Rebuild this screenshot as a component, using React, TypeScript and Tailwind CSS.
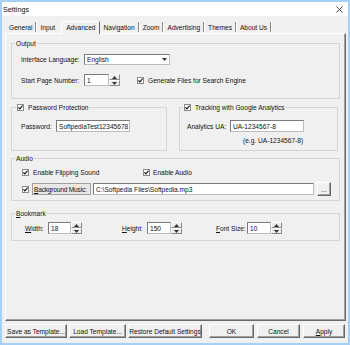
import React from "react";

const tabs = ["General", "Input", "Advanced", "Navigation", "Zoom", "Advertising", "Themes", "About Us"];

function Check() {
  return (
    <span className="inline-flex w-[7px] h-[7px] shrink-0 items-center justify-center border border-[#8a8a8a] bg-white">
      <svg width="5" height="5" viewBox="0 0 5 5">
        <path d="M0.4 2.3 L1.9 3.9 L4.6 0.7" fill="none" stroke="#111" strokeWidth="1.1" />
      </svg>
    </span>
  );
}

function Arrow({ up }: { up?: boolean }) {
  return (
    <svg width="5" height="3" viewBox="0 0 5 3">
      <path d={up ? "M0 3 L2.5 0 L5 3 Z" : "M0 0 L2.5 3 L5 0 Z"} fill="#333" />
    </svg>
  );
}

function Field({ value, className }: { value: string; className: string }) {
  return (
    <div className={`h-[12px] bg-white border border-[#bcbcbc] border-t-[#7a7a7a] border-l-[#7a7a7a] flex items-center pl-[2px] overflow-hidden ${className}`}>
      {value}
    </div>
  );
}

function Spin({ value, className }: { value: string; className: string }) {
  return (
    <div className="flex h-[12px]">
      <Field value={value} className={className} />
      <div className="flex flex-col w-[11px] h-[12px]">
        <div className="h-[6px] flex items-center justify-center border border-t-white border-l-white border-r-[#8a8a8a] border-b-[#8a8a8a] bg-[#ececec]">
          <Arrow up />
        </div>
        <div className="h-[6px] flex items-center justify-center border border-t-white border-l-white border-r-[#8a8a8a] border-b-[#8a8a8a] bg-[#ececec]">
          <Arrow />
        </div>
      </div>
    </div>
  );
}

function Btn({ children, className }: { children: React.ReactNode; className: string }) {
  return (
    <div className={`h-[14px] flex items-center justify-center bg-[#f0f0f0] border border-t-white border-l-white border-r-[#696969] border-b-[#696969] shadow-[inset_-1px_-1px_0_#a0a0a0] ${className}`}>
      {children}
    </div>
  );
}

export default function App() {
  return (
    <div className="w-[350px] h-[345px] flex flex-col bg-[#f0f0f0] border-2 border-[#a6d0f4] text-[6.6px] leading-[9px] text-[#111] whitespace-nowrap font-['Liberation_Sans',Arial,sans-serif] overflow-hidden">
      {/* title bar */}
      <div className="h-[14px] shrink-0 bg-white flex items-center justify-between pl-[1px] pr-[5px] text-[7.2px]">
        <span>Settings</span>
        <svg width="7" height="7" viewBox="0 0 7 7">
          <path d="M0.5 0.5 L6.5 6.5 M6.5 0.5 L0.5 6.5" stroke="#333" strokeWidth="0.9" />
        </svg>
      </div>

      <div className="flex flex-col pl-[3px] pr-[2px]">
        {/* tabs */}
        <div className="mt-[4px] h-[13px] flex items-end pl-[1px]">
          {tabs.map((t, i) => {
            if (t === "Advanced")
              return (
                <div key={t} className="ml-[3px] h-[13px] flex items-center px-[4px] border-t border-l border-r border-t-white border-l-white border-r-[#696969] -mb-px relative z-10 bg-[#f0f0f0] pb-[1px]">
                  {t}
                </div>
              );
            return (
              <React.Fragment key={t}>
                <div className="h-[11px] flex items-center px-[3px]">{t}</div>
                {tabs[i + 1] !== "Advanced" && <span className="w-px h-[10px] mb-[1px] bg-[#8a8a8a] border-r border-white box-content" />}
              </React.Fragment>
            );
          })}
        </div>

        {/* panel */}
        <div className="h-[288px] border border-t-white border-l-white border-r-[#696969] border-b-[#696969] shadow-[inset_-1px_-1px_0_#a0a0a0] px-[5px] flex flex-col">
          {/* Output */}
          <fieldset className="mt-[5px] border border-[#d5d5d5] pl-[9px] pb-[12px]">
            <legend className="-ml-[6px] px-[1px]">Output</legend>
            <div className="mt-[6px] flex items-center h-[11px]">
              <span className="w-[63px]">Interface Language:</span>
              <div className="w-[86px] h-[11px] bg-white border border-[#bcbcbc] border-t-[#7a7a7a] border-l-[#7a7a7a] flex items-center justify-between pl-[2px]">
                <span>English</span>
                <div className="w-[9px] h-[9px] flex items-center justify-center">
                  <Arrow />
                </div>
              </div>
            </div>
            <div className="mt-[9px] flex items-center">
              <span className="w-[63px]">Start Page Number:</span>
              <Spin value="1" className="w-[25px]" />
              <span className="ml-[17px] mr-[4px]"><Check /></span>
              <span>Generate Files for Search Engine</span>
            </div>
          </fieldset>

          {/* Password / Tracking */}
          <div className="mt-[4px] flex gap-[12px]">
            <fieldset className="w-[156px] h-[48px] border border-[#d5d5d5] pl-[9px]">
              <legend className="-ml-[5px] px-[1px] flex items-center gap-[4px]"><Check />Password Protection</legend>
              <div className="mt-[8px] flex items-center">
                <span className="w-[35px]">Password:</span>
                <Field value="SoftpediaTest12345678" className="w-[74px]" />
              </div>
            </fieldset>
            <fieldset className="w-[159px] h-[48px] border border-[#d5d5d5] pl-[7px]">
              <legend className="-ml-[4px] px-[1px] flex items-center gap-[4px]"><Check />Tracking with Google Analytics</legend>
              <div className="mt-[8px] flex items-center">
                <span className="w-[43px]">Analytics UA:</span>
                <Field value="UA-1234567-8" className="w-[74px]" />
              </div>
              <div className="mt-[4px] pl-[56px]">(e.g. UA-1234567-8)</div>
            </fieldset>
          </div>

          {/* Audio */}
          <fieldset className="mt-[3px] h-[47px] border border-[#d5d5d5] pl-[10px]">
            <legend className="-ml-[7px] px-[1px]">Audio</legend>
            <div className="mt-[5px] flex items-center h-[9px]">
              <span className="mr-[4px]"><Check /></span>
              <span className="w-[110px]">Enable Flipping Sound</span>
              <span className="mr-[3px]"><Check /></span>
              <span>Enable Audio</span>
            </div>
            <div className="mt-[5px] flex items-center">
              <span className="mr-[3px]"><Check /></span>
              <span className="h-[12px] w-[59px] flex items-center border border-[#a0a0a0] bg-[#e8e8e8] pl-[1px] tracking-[-0.2px]"><u>B</u>ackground Music:</span>
              <Field value="C:\Softpedia Files\Softpedia.mp3" className="w-[221px] ml-[2px]" />
              <Btn className="w-[14px] ml-[3px]">...</Btn>
            </div>
          </fieldset>

          {/* Bookmark */}
          <fieldset className="mt-[8px] h-[32px] border border-[#d5d5d5] pl-[13px]">
            <legend className="-ml-[10px] px-[1px]"><u>B</u>ookmark</legend>
            <div className="mt-[4px] flex items-center">
              <span className="w-[23px]"><u>W</u>idth:</span>
              <Spin value="18" className="w-[23px]" />
              <span className="ml-[40px] w-[25px]"><u>H</u>eight:</span>
              <Spin value="150" className="w-[24px]" />
              <span className="ml-[34px] w-[31px]"><u>F</u>ont Size:</span>
              <Spin value="10" className="w-[24px]" />
            </div>
          </fieldset>
        </div>

        {/* buttons */}
        <div className="mt-[3px] flex items-center">
          <Btn className="w-[62px]">Save as Template...</Btn>
          <Btn className="w-[57px] ml-[2px]">Load Template...</Btn>
          <Btn className="w-[74px] ml-[2px]">Restore Default Settings</Btn>
          <Btn className="w-[45px] ml-[7px]">OK</Btn>
          <Btn className="w-[43px] ml-[3px]">Cancel</Btn>
          <Btn className="w-[42px] ml-[3px]"><u>A</u>pply</Btn>
        </div>
      </div>
    </div>
  );
}
